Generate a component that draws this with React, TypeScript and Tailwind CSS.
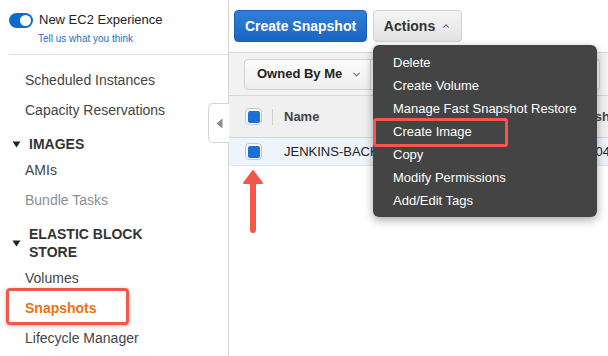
import { ChevronDown, ChevronUp } from 'lucide-react'

const font = { fontFamily: '"Liberation Sans", Arial, sans-serif' }

function Checkbox() {
  return (
    <span className="flex h-[17px] w-[17px] items-center justify-center rounded-[4px] border border-[#c8c8c8] bg-[#f7f7f7]">
      <span className="h-[12px] w-[12px] rounded-[2px] bg-[#1b6fd6]" />
    </span>
  )
}

function Caret() {
  return (
    <svg width="9" height="7" viewBox="0 0 9 7" className="mr-[8px] shrink-0">
      <path d="M0.5 0.5 H8.5 L4.5 6.5 Z" fill="#222" />
    </svg>
  )
}

function Sidebar() {
  return (
    <div className="relative w-[229px] shrink-0 border-r border-[#d5d5d5] bg-white">
      <div className="flex items-center pl-[9px] pt-[12px]">
        <span className="flex h-[15px] w-[24px] items-center justify-end rounded-full bg-[#0d6bd0] pr-[2px]">
          <span className="h-[11px] w-[11px] rounded-full bg-white" />
        </span>
        <span className="ml-[6px] text-[13px] leading-[16px] text-[#222]">New EC2 Experience</span>
      </div>
      <div className="pl-[38px] pt-[5px] text-[10px] leading-[12px] text-[#2a6ebd]">Tell us what you think</div>
      <div className="ml-[9px] mt-[9px] h-px bg-[#ddd]" />

      <div className="pt-[10px] text-[14px] text-[#444]">
        <div className="flex h-[30px] items-center pl-[25px]">Scheduled Instances</div>
        <div className="flex h-[30px] items-center pl-[25px]">Capacity Reservations</div>
        <div className="flex h-[30px] items-center pl-[12px] pt-[8px] font-bold text-[#333]">
          <Caret />
          IMAGES
        </div>
        <div className="flex h-[30px] items-center pl-[25px]">AMIs</div>
        <div className="flex h-[30px] items-center pl-[25px] text-[#8a8f94]">Bundle Tasks</div>
        <div className="flex h-[48px] items-center pl-[12px] pt-[8px] font-bold leading-[18px] text-[#333]">
          <Caret />
          <span>
            ELASTIC BLOCK
            <br />
            STORE
          </span>
        </div>
        <div className="flex h-[30px] items-center pl-[25px]">Volumes</div>
        <div className="flex h-[30px] items-center pl-[25px] font-bold text-[#ec7211]">Snapshots</div>
        <div className="flex h-[30px] items-center pl-[25px]">Lifecycle Manager</div>
      </div>

      <div className="absolute left-[6px] top-[288px] h-[37px] w-[123px] rounded-[4px] border-[3px] border-[#f4574a] shadow-[0_1px_4px_rgba(0,0,0,0.25)]" />

      <div className="absolute right-[-1px] top-[103px] flex h-[40px] w-[21px] items-center justify-center rounded-l-[5px] border border-r-0 border-[#d5d5d5] bg-white">
        <svg width="7" height="11" viewBox="0 0 7 11">
          <path d="M6.5 0.5 L0.5 5.5 L6.5 10.5 Z" fill="#8c8c8c" />
        </svg>
      </div>
    </div>
  )
}

const menuItems = [
  'Delete',
  'Create Volume',
  'Manage Fast Snapshot Restore',
  'Create Image',
  'Copy',
  'Modify Permissions',
  'Add/Edit Tags',
]

function Main() {
  return (
    <div className="relative min-w-0 flex-1 bg-white">
      <div className="flex gap-[6px] pl-[5px] pt-[10px]">
        <button className="h-[32px] w-[133px] rounded-[4px] border border-[#1a5fb4] bg-gradient-to-b from-[#2f7fd8] to-[#1b65c2] text-[14px] font-bold text-white">
          Create Snapshot
        </button>
        <button className="flex h-[32px] w-[89px] items-center justify-center gap-[6px] rounded-[4px] border border-[#cfcfcf] bg-gradient-to-b from-[#f5f5f5] to-[#e3e3e3] text-[14px] font-bold text-[#333]">
          Actions
          <ChevronUp size={10} strokeWidth={2.5} className="text-[#555]" />
        </button>
      </div>

      <div className="mt-[10px] flex h-[43px] items-center gap-0 border-t border-[#d9d9d9] bg-[#f2f2f2] pl-[15px] pr-[8px]">
        <div className="flex h-[31px] w-[127px] items-center rounded-l-[4px] border border-[#d0d0d0] bg-gradient-to-b from-[#fbfbfb] to-[#efefef] pl-[12px] text-[13px] font-bold text-[#222]">
          Owned By Me
          <ChevronDown size={11} strokeWidth={2.5} className="ml-[9px] text-[#777]" />
        </div>
        <div className="h-[31px] flex-1 rounded-r-[4px] border border-l-0 border-[#d0d0d0] bg-white" />
      </div>

      <div className="flex h-[43px] items-center border-y border-[#d6d6d6] bg-[#f0f0f0] text-[13px] font-bold text-[#444]">
        <span className="ml-[16px]">
          <Checkbox />
        </span>
        <span className="ml-[10px] h-[16px] w-px bg-[#d0d0d0]" />
        <span className="ml-[11px]">Name</span>
        <span className="ml-auto w-[45px] overflow-hidden whitespace-nowrap">Snapshot ID</span>
      </div>
      <div className="flex h-[28px] items-center border-b border-[#e2e8f0] bg-[#eef4fc] text-[13px] text-[#222]">
        <span className="ml-[16px]">
          <Checkbox />
        </span>
        <span className="ml-[22px]">JENKINS-BACKUP</span>
        <span className="ml-auto w-[45px] overflow-hidden whitespace-nowrap">snap-04a1c7e2</span>
      </div>

      <svg width="24" height="64" viewBox="0 0 24 64" className="ml-[12px] mt-[4px]">
        <path d="M12 1 L21 13 H3 Z" fill="#f4574a" stroke="#f4574a" strokeWidth="2" strokeLinejoin="round" />
        <line x1="12" y1="10" x2="12" y2="60" stroke="#f4574a" strokeWidth="6" strokeLinecap="round" />
      </svg>

      <div className="absolute left-[144px] top-[45px] w-[224px] rounded-[6px] bg-[#444] pb-[5px] pt-[6px] text-[13px] text-white shadow-[0_3px_10px_rgba(0,0,0,0.35)]">
        {menuItems.map((m) => (
          <div key={m} className="h-[23px] pl-[20px] leading-[23px]">
            {m}
          </div>
        ))}
        <div className="absolute left-0 top-[73px] h-[29px] w-[135px] rounded-[3px] border-[3px] border-[#f4574a]" />
      </div>
    </div>
  )
}

export default function App() {
  return (
    <div className="flex h-[356px] w-[608px] overflow-hidden bg-white" style={font}>
      <Sidebar />
      <Main />
    </div>
  )
}
